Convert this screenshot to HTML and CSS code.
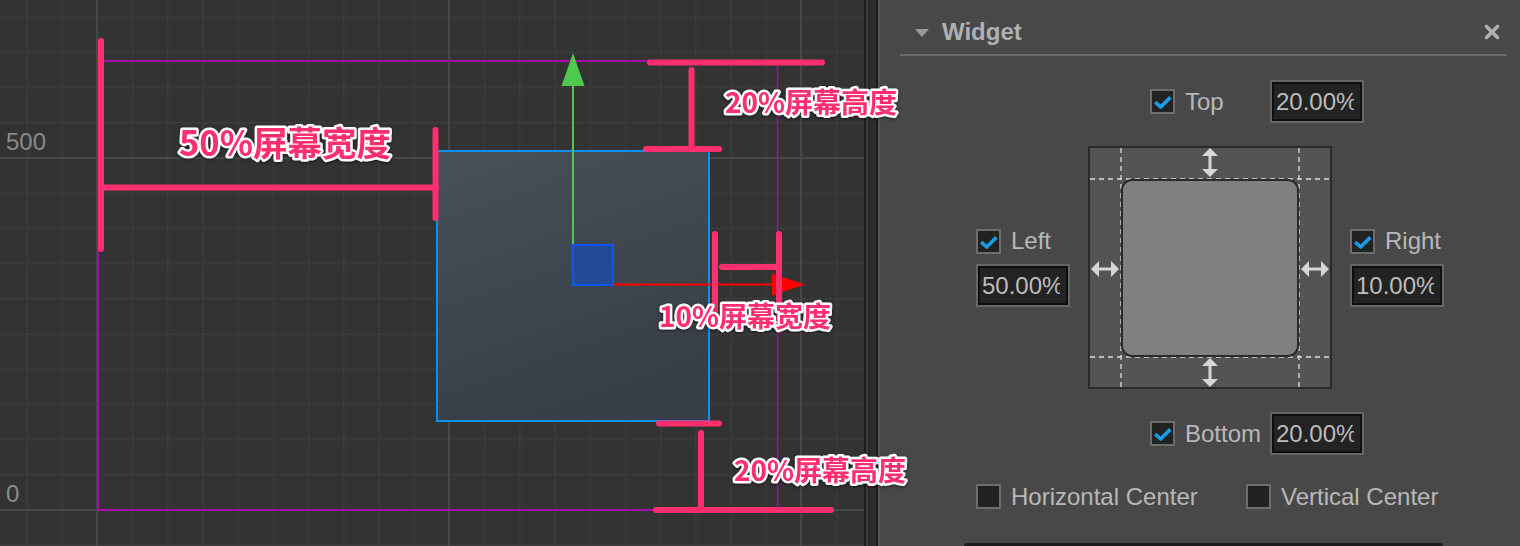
FILE: index.html
```html
<!DOCTYPE html>
<html>
<head>
<meta charset="utf-8">
<link rel="stylesheet" href="styles.css">
</head>
<body>
<div class="app">
  <div class="scene">
    <svg class="scene-svg" width="864" height="546" viewBox="0 0 864 546">
      <defs>
        <pattern id="grid" patternUnits="userSpaceOnUse" x="26.2" y="16.4" width="35.2" height="35.2">
          <rect x="0" y="0" width="1.6" height="35.2" fill="#3b3b3b"/>
          <rect x="0" y="0" width="35.2" height="1.6" fill="#3b3b3b"/>
        </pattern>
        <linearGradient id="nodefill" x1="0" y1="0" x2="0.35" y2="1">
          <stop offset="0" stop-color="#47515a"/>
          <stop offset="1" stop-color="#373e46"/>
        </linearGradient>
      </defs>
      <rect width="864" height="546" fill="#333333"/>
      <rect width="864" height="546" fill="url(#grid)"/>
      <g fill="#474747">
        <rect x="96" y="0" width="2" height="546"/>
        <rect x="448" y="0" width="2" height="546"/>
        <rect x="800" y="0" width="2" height="546"/>
        <rect x="0" y="157" width="864" height="2"/>
        <rect x="0" y="509" width="864" height="2"/>
      </g>
      <text class="axis" x="6" y="150">500</text>
      <text class="axis" x="6" y="502">0</text>

      <g stroke="#a80ca8" fill="none">
        <line x1="98" y1="61" x2="777" y2="61" stroke-width="2"/>
        <line x1="98" y1="61" x2="98" y2="510" stroke-width="2"/>
        <line x1="98" y1="510" x2="777" y2="510" stroke-width="2"/>
        <line x1="777.5" y1="61" x2="777.5" y2="510" stroke-width="1.5"/>
      </g>

      <rect x="437" y="151" width="272" height="270" fill="url(#nodefill)" stroke="#0f8ff0" stroke-width="2"/>

      <line x1="573" y1="85" x2="573" y2="244" stroke="#4ec94e" stroke-width="2"/>
      <polygon points="573,53 584.5,86 561.5,86" fill="#4ec94e"/>
      <line x1="613" y1="284.5" x2="775" y2="284.5" stroke="#ff0000" stroke-width="2"/>
      <polygon points="772,273.5 805,284.5 772,295.5" fill="#ff0000"/>
      <rect x="573" y="245" width="40" height="40" fill="#234a95" stroke="#0f55ee" stroke-width="2"/>

      <g stroke="#ff2e6e" stroke-width="6" stroke-linecap="round" fill="none">
        <line x1="101" y1="41" x2="101" y2="249"/>
        <line x1="101" y1="187.5" x2="436" y2="187.5"/>
        <line x1="435.5" y1="130" x2="435.5" y2="218"/>

        <line x1="650" y1="62.5" x2="822" y2="62.5"/>
        <line x1="691.5" y1="70" x2="691.5" y2="148"/>
        <line x1="646" y1="149" x2="719" y2="149"/>

        <line x1="715" y1="234" x2="715" y2="322"/>
        <line x1="779" y1="234" x2="779" y2="330"/>
        <line x1="722" y1="267" x2="778" y2="267"/>

        <line x1="659" y1="423.5" x2="719" y2="423.5"/>
        <line x1="701" y1="433" x2="701" y2="510"/>
        <line x1="656" y1="510" x2="831" y2="510"/>
      </g>

      <text class="ann ann-lg" x="179" y="156">50%屏幕宽度</text>
      <text class="ann" x="725" y="112.5">20%屏幕高度</text>
      <text class="ann" x="659" y="327">10%屏幕宽度</text>
      <text class="ann" x="734" y="481">20%屏幕高度</text>
    </svg>
  </div>

  <div class="splitter"></div>

  <div class="panel">
    <div class="panel-header">
      <span class="caret"></span>
      <span class="title">Widget</span>
      <svg class="close" width="16" height="16" viewBox="0 0 16 16">
        <path d="M2.5 2.5 L13.5 13.5 M13.5 2.5 L2.5 13.5" stroke="#b0b0b0" stroke-width="3.6" stroke-linecap="round"/>
      </svg>
    </div>

    <div class="widget-editor">
      <div class="edge-row edge-row-top">
        <span class="chk"><svg width="21" height="21" viewBox="0 0 21 21"><path d="M3.2 11.2 L8.6 16 L18.4 6.4" fill="none" stroke="#1a9de8" stroke-width="3.6" stroke-linejoin="round"/></svg></span>
        <span class="lbl edge-lbl">Top</span>
        <div class="num"><span>20.00%</span></div>
      </div>

      <div class="middle">
        <div class="side">
          <div class="side-head">
            <span class="chk"><svg width="21" height="21" viewBox="0 0 21 21"><path d="M3.2 11.2 L8.6 16 L18.4 6.4" fill="none" stroke="#1a9de8" stroke-width="3.6" stroke-linejoin="round"/></svg></span>
            <span class="lbl">Left</span>
          </div>
          <div class="num"><span>50.00%</span></div>
        </div>

        <svg class="diagram" width="244" height="243" viewBox="0 0 244 243">
          <rect x="1" y="1" width="242" height="241" fill="#545454" stroke="#2a2a2a" stroke-width="2"/>
          <g stroke="#dedede" stroke-width="1.3" stroke-dasharray="5 4" fill="none">
            <line x1="33" y1="2" x2="33" y2="241"/>
            <line x1="211" y1="2" x2="211" y2="241"/>
            <line x1="2" y1="33" x2="242" y2="33"/>
            <line x1="2" y1="211" x2="242" y2="211"/>
          </g>
          <rect x="34" y="34" width="176" height="176" rx="10" fill="#808080" stroke="#2b2b2b" stroke-width="2"/>
          <g fill="#d6d6d6">
            <path d="M122 2 L130 10 L123.5 10 L123.5 23 L130 23 L122 31 L114 23 L120.5 23 L120.5 10 L114 10 Z"/>
            <path d="M122 212 L130 220 L123.5 220 L123.5 233 L130 233 L122 241 L114 233 L120.5 233 L120.5 220 L114 220 Z"/>
            <path d="M3 123 L11 115 L11 121.5 L23 121.5 L23 115 L31 123 L23 131 L23 124.5 L11 124.5 L11 131 Z"/>
            <path d="M213 123 L221 115 L221 121.5 L233 121.5 L233 115 L241 123 L233 131 L233 124.5 L221 124.5 L221 131 Z"/>
          </g>
        </svg>

        <div class="side">
          <div class="side-head">
            <span class="chk"><svg width="21" height="21" viewBox="0 0 21 21"><path d="M3.2 11.2 L8.6 16 L18.4 6.4" fill="none" stroke="#1a9de8" stroke-width="3.6" stroke-linejoin="round"/></svg></span>
            <span class="lbl">Right</span>
          </div>
          <div class="num"><span>10.00%</span></div>
        </div>
      </div>

      <div class="edge-row edge-row-bottom">
        <span class="chk"><svg width="21" height="21" viewBox="0 0 21 21"><path d="M3.2 11.2 L8.6 16 L18.4 6.4" fill="none" stroke="#1a9de8" stroke-width="3.6" stroke-linejoin="round"/></svg></span>
        <span class="lbl edge-lbl">Bottom</span>
        <div class="num"><span>20.00%</span></div>
      </div>

      <div class="centers">
        <div class="center-item">
          <span class="chk"></span>
          <span class="lbl">Horizontal Center</span>
        </div>
        <div class="center-item">
          <span class="chk"></span>
          <span class="lbl">Vertical Center</span>
        </div>
      </div>
    </div>

    <div class="next-block"></div>
  </div>
</div>
</body>
</html>
```

FILE: styles.css
```css
html, body {
  margin: 0;
  padding: 0;
  background: #484848;
  overflow: hidden;
}

.app {
  display: flex;
  width: 1520px;
  height: 546px;
}

.scene {
  width: 864px;
  height: 546px;
  flex: none;
  background: #333333;
  position: relative;
  z-index: 2;
}

.scene-svg {
  display: block;
  overflow: visible;
}

.axis {
  font-family: "Liberation Sans", Arial, sans-serif;
  font-size: 24px;
  fill: #8a8a8a;
}

.ann {
  font-family: "Noto Sans CJK SC", "Noto Sans", sans-serif;
  font-weight: 700;
  font-size: 28px;
  fill: #ff2e6e;
  stroke: #ffffff;
  stroke-width: 5px;
  stroke-linejoin: round;
  paint-order: stroke;
  filter: drop-shadow(0 1px 1.5px rgba(0, 0, 0, 0.55));
}

.ann-lg {
  font-size: 34.5px;
}

.splitter {
  width: 16px;
  flex: none;
  background: linear-gradient(to right,
    #1d1d1d 0, #1d1d1d 2px,
    #3d3d3d 2px, #3d3d3d 4px,
    #262626 4px, #262626 6px,
    #2d2d2d 6px, #2d2d2d 12px,
    #1a1a1a 12px, #1a1a1a 14px,
    #555555 14px, #555555 16px);
}

.panel {
  flex: 1;
  background: #484848;
  display: flex;
  flex-direction: column;
  font-family: "Liberation Sans", Arial, sans-serif;
  color: #b8b8b8;
}

.panel-header {
  height: 56px;
  box-sizing: border-box;
  margin: 0 13px 0 20px;
  padding: 10px 7px 0 15px;
  border-bottom: 2px solid #686868;
  display: flex;
  align-items: center;
}

.caret {
  width: 0;
  height: 0;
  border-left: 7px solid transparent;
  border-right: 7px solid transparent;
  border-top: 8px solid #9a9a9a;
  margin-top: 1px;
}

.title {
  margin-left: 13px;
  font-size: 24px;
  font-weight: 700;
  color: #b0b0b0;
  flex: 1;
}

.close {
  display: block;
}

.widget-editor {
  padding-left: 96px;
  display: flex;
  flex-direction: column;
}

.edge-row {
  display: flex;
  align-items: center;
  height: 43px;
  padding-left: 174px;
}

.edge-row .num {
  margin-left: 6px;
}

.edge-row-top {
  margin-top: 24px;
}

.edge-row-bottom {
  margin-top: 23px;
}

.chk {
  width: 25px;
  height: 25px;
  box-sizing: border-box;
  border: 2px solid #6e6e6e;
  background: #222222;
  flex: none;
  display: block;
}

.chk svg {
  display: block;
}

.lbl {
  font-size: 24px;
  line-height: 28px;
  margin-left: 10px;
  white-space: nowrap;
}

.edge-lbl {
  width: 79px;
}

.num {
  width: 94px;
  height: 43px;
  box-sizing: border-box;
  border: 2px solid #666666;
  background: #232323;
  box-shadow: inset 0 0 0 2px #0e0e0e;
  padding: 0 8px 0 4px;
  flex: none;
}

.num span {
  display: block;
  overflow: hidden;
  white-space: nowrap;
  font-size: 24px;
  line-height: 39px;
  color: #bcbcbc;
}

.middle {
  margin-top: 23px;
  display: flex;
  align-items: center;
  gap: 18px;
}

.side {
  width: 94px;
  display: flex;
  flex-direction: column;
  gap: 10px;
}

.side-head {
  display: flex;
  align-items: center;
  height: 25px;
}

.diagram {
  display: block;
  flex: none;
}

.centers {
  margin-top: 29px;
  display: grid;
  grid-template-columns: 270px auto;
}

.center-item {
  display: flex;
  align-items: center;
  height: 25px;
}

.next-block {
  margin: 34px 0 0 84px;
  width: 479px;
  flex: 1;
  background: #1d1d1d;
  border-radius: 4px 4px 0 0;
}
```
